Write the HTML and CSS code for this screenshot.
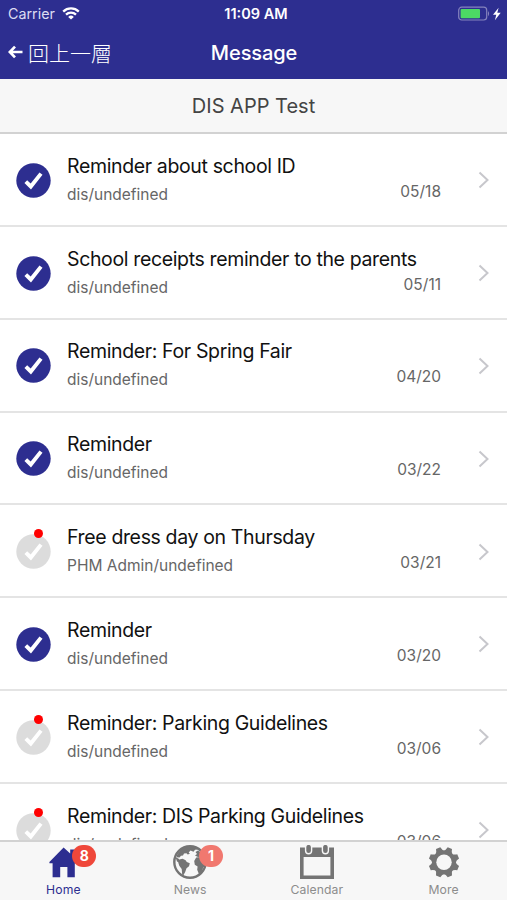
FILE: index.html
```html
<!DOCTYPE html>
<html lang="en">

<head>
  <meta charset="UTF-8">
  <meta name="viewport" content="width=device-width, initial-scale=1.0">
  <title>Message</title>
  <link rel="stylesheet" href="styles.css">
</head>

<body>
  <svg class="symbols">
    <symbol id="check" viewBox="0 0 35 35">
      <circle cx="17.5" cy="17.5" r="17.2" fill="currentColor" />
      <path d="M9.8 18.6l5 4.9L25 10.6" fill="none" stroke="#fff" stroke-width="3.9" />
    </symbol>
    <symbol id="chevron" viewBox="0 0 12 18">
      <path d="M1.5 1.5L9.5 9l-8 7.5" fill="none" stroke="#c7c7cc" stroke-width="2" />
    </symbol>
  </svg>

  <div class="app">
    <header class="header">
      <div class="status">
        <div class="carrier">
          <span>Carrier</span>
          <svg class="wifi" width="18" height="13" viewBox="0 0 18 13">
            <g fill="none" stroke="#fff" stroke-width="2.3">
              <path d="M1.2 4.6a11.2 11.2 0 0 1 15.6 0" />
              <path d="M4 7.7a7.2 7.2 0 0 1 10 0" />
            </g>
            <path d="M9 12.6L6.2 9.9a4 4 0 0 1 5.6 0z" fill="#fff" />
          </svg>
        </div>
        <div class="clock">11:09 AM</div>
        <div class="battery">
          <svg width="45" height="16" viewBox="0 0 45 16">
            <rect x=".7" y="1.2" width="28" height="12.8" rx="3" fill="none" stroke="#8583bd" stroke-width="1.2" />
            <rect x="2.6" y="3" width="19.4" height="9.2" rx="1" fill="#4cd964" />
            <path d="M30 5q2.2 2.6 0 5.2z" fill="#8583bd" />
            <path d="M40.6 1.8L35 8.8h3.3l-1.4 5.4 5.8-7.4h-3.4z" fill="#fff" />
          </svg>
        </div>
      </div>
      <div class="navbar">
        <div class="back">
          <svg width="15" height="14" viewBox="0 0 15 14">
            <path d="M7 1.6L1.8 7 7 12.4M2 7h12.5" fill="none" stroke="#fff" stroke-width="2.7" />
          </svg>
          <span>回上一層</span>
        </div>
        <div class="title">Message</div>
      </div>
    </header>

    <div class="subheader"><span>DIS APP Test</span></div>

    <ul class="list" id="list"></ul>

    <nav class="tabs">
      <div class="tab active">
        <div class="icon">
          <svg width="34" height="36" viewBox="0 0 34 36">
            <path d="M17.6 2.5L3.4 17v1.2h3.2v14h7.6V22h7.2v10.2h7.4v-14h3.4V17l-3.4-3.6V4.4h-4.6v4.2z" fill="currentColor" />
          </svg>
          <b class="badge">8</b>
        </div>
        <span>Home</span>
      </div>
      <div class="tab">
        <div class="icon">
          <svg width="34" height="36" viewBox="0 0 34 36">
            <circle cx="17" cy="17" r="15.7" fill="none" stroke="currentColor" stroke-width="2.4" />
            <path d="M4 10C7 5 11 2 16 1.5l6 .8 3 2.2-3 .2-1.5 2-3-1.2-1.8 2 1.2 1.2-2.2.8-1.2-1.3-2.5.4-1 2-2 .2-1.5 1.8-2.5-.4z" fill="currentColor" />
            <path d="M6.2 14.4l3.4-.6 3 1.4 1.2 1.9 3 1.2-.8 3-2.5 2-1.3 3.7-2 3.6-1-1.2-.5-5.4-2.4-3.2-1-3z" fill="currentColor" />
            <path d="M2.5 12l3.5 2 1 4-3-1.5zM22 10.5l2-1.5-1.5-2L25 5.5l3 2 1 4-4 .5z" fill="currentColor" />
            <path d="M21.2 16l2-3.4 4.2-.6 4 2 .6 6.5-2 2.5-1 4-2.8 2.8-2-5 .4-3.4-2.8-1.6z" fill="currentColor" />
          </svg>
          <b class="badge">1</b>
        </div>
        <span>News</span>
      </div>
      <div class="tab">
        <div class="icon">
          <svg width="34" height="36" viewBox="0 0 34 36">
            <path d="M0 2.4h34V34H0zM3.6 12v18.6h26.8V12z" fill="currentColor" fill-rule="evenodd" />
            <g fill="currentColor" stroke="#f7f7f7" stroke-width="1.4">
              <rect x="5.6" y="-.8" width="6" height="9.6" rx="3" />
              <rect x="22.4" y="-.8" width="6" height="9.6" rx="3" />
            </g>
          </svg>
        </div>
        <span>Calendar</span>
      </div>
      <div class="tab">
        <div class="icon">
          <svg width="34" height="36" viewBox="-17 -17.3 34 36">
            <g fill="currentColor" transform="rotate(22.5)">
              <path id="tooth" d="M-5-10.5Q-2.8-12-2.3-15.3h4.6Q2.8-12 5-10.5v21Q2.8 12 2.3 15.3h-4.6Q-2.8 12-5 10.5z" />
              <use href="#tooth" transform="rotate(45)" />
              <use href="#tooth" transform="rotate(90)" />
              <use href="#tooth" transform="rotate(135)" />
            </g>
            <circle r="7.7" fill="#f7f7f7" />
          </svg>
        </div>
        <span>More</span>
      </div>
    </nav>
  </div>

  <script>
    const messages = [
      { title: 'Reminder about school ID', from: 'dis/undefined', date: '05/18', read: true },
      { title: 'School receipts reminder to the parents', from: 'dis/undefined', date: '05/11', read: true },
      { title: 'Reminder: For Spring Fair', from: 'dis/undefined', date: '04/20', read: true },
      { title: 'Reminder', from: 'dis/undefined', date: '03/22', read: true },
      { title: 'Free dress day on Thursday', from: 'PHM Admin/undefined', date: '03/21', read: false },
      { title: 'Reminder', from: 'dis/undefined', date: '03/20', read: true },
      { title: 'Reminder: Parking Guidelines', from: 'dis/undefined', date: '03/06', read: false },
      { title: 'Reminder: DIS Parking Guidelines', from: 'dis/undefined', date: '03/06', read: false }
    ]
    const list = document.getElementById('list')

    for (const msg of messages) {
      list.innerHTML += `
        <li class="item ${msg.read ? 'read' : 'unread'}">
          <div class="mark">
            <svg width="35" height="35"><use href="#check" /></svg>
          </div>
          <div class="content">
            <div class="subject"><span>${msg.title}</span></div>
            <div class="meta">
              <span class="from">${msg.from}</span>
              <span class="date">${msg.date}</span>
            </div>
          </div>
          <svg class="chevron" width="12" height="18"><use href="#chevron" /></svg>
        </li>`
    }
  </script>
</body>

</html>
```
FILE: styles.css
```css
* {
  box-sizing: border-box;
}

body {
  margin: 0;
  font-family: Inter, 'Liberation Sans', 'Noto Sans CJK TC', sans-serif;
  color: #111;
}

.symbols {
  display: none;
}

svg {
  display: block;
}

.app {
  display: flex;
  flex-direction: column;
  height: 900px;
  overflow: hidden;
  background: #fff;
}

.header {
  flex: none;
  height: 79px;
  background: #2d2e90;
  color: #fff;
}

.status {
  display: grid;
  grid-template-columns: 1fr auto 1fr;
  align-items: center;
  height: 27px;
  padding: 0 4px 0 8px;
}

.carrier {
  display: flex;
  align-items: center;
  gap: 7px;
  font-size: 14.3px;
  color: #dcdcf2;
}

.clock {
  padding-left: 1px;
  font-size: 14.5px;
  font-weight: 600;
}

.battery {
  display: flex;
  justify-content: flex-end;
}

.navbar {
  display: grid;
  grid-template-columns: 1fr auto 1fr;
  align-items: center;
  height: 52px;
  padding: 0 8px;
}

.back {
  display: flex;
  align-items: center;
  gap: 5px;
  padding-bottom: 2px;
  font-family: 'Noto Sans CJK TC', sans-serif;
  font-size: 21px;
  font-weight: 300;
  line-height: 30px;
}

.back span {
  height: 31px;
}

.title {
  padding-left: 1px;
  font-size: 20px;
  font-weight: 500;
  letter-spacing: -.1px;
}

.subheader {
  flex: none;
  height: 55px;
  border-bottom: 2px solid #d2d2d2;
  background: #f7f7f7;
  text-align: center;
  font-size: 20px;
  line-height: 54px;
  color: #444;
}

.list {
  flex: 1;
  min-height: 0;
  margin: 0;
  padding: 0;
  overflow: hidden;
  list-style: none;
}

.item {
  display: flex;
  align-items: center;
  height: 92.85px;
  padding: 1.5px 17px 0 16px;
  border-bottom: 2px solid #e4e4e4;
}

.mark {
  position: relative;
  margin-right: 16px;
  color: #2d2e90;
}

.unread .mark {
  color: #dcdcdc;
}

.unread .mark::after {
  content: '';
  position: absolute;
  top: -5px;
  left: 17.5px;
  width: 9px;
  height: 9px;
  border-radius: 50%;
  background: #f00;
}

.content {
  flex: 1;
}

.subject {
  font-size: 19.5px;
  line-height: 26px;
  letter-spacing: -.36px;
  white-space: nowrap;
}

.meta {
  display: flex;
  justify-content: space-between;
  padding-right: 37px;
  font-size: 15.5px;
  line-height: 26px;
  color: #666;
}

.from {
  padding-top: 3px;
}

.tabs {
  flex: none;
  display: grid;
  grid-template-columns: repeat(4, 1fr);
  height: 60px;
  border-top: 2px solid #d2d2d2;
  background: #f7f7f7;
}

.tab {
  display: flex;
  flex-direction: column;
  align-items: center;
  padding-top: 3px;
  font-size: 12.2px;
  line-height: 17px;
  letter-spacing: .1px;
  color: #8c8c8c;
}

.tab.active {
  color: #2d2e90;
}

.icon {
  position: relative;
  color: #747474;
}

.active .icon {
  color: #2d2e90;
}

.badge {
  position: absolute;
  top: 0;
  left: 26px;
  width: 24px;
  height: 22px;
  border-radius: 11px;
  background: #ef473a;
  color: #fff;
  text-align: center;
  font-size: 14px;
  line-height: 22px;
}

.tab:not(.active) .badge {
  background: #f1786f;
}
```
